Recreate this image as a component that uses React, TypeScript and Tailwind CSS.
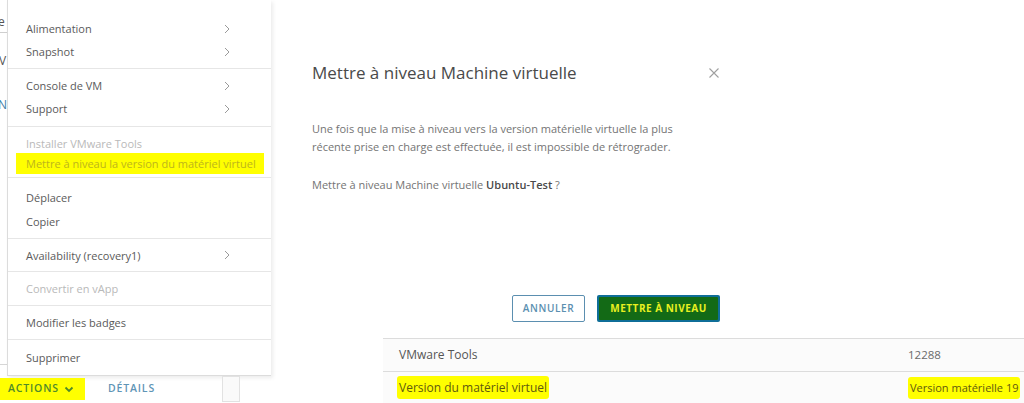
import React from 'react'

const font = { fontFamily: '"Open Sans", "Liberation Sans", sans-serif' }

function Chevron() {
    return (
        <svg width="8" height="10" viewBox="0 0 8 10" className="shrink-0">
            <polyline points="2,1 6,5 2,9" fill="none" stroke="#9a9a9a" strokeWidth="1" />
        </svg>
    )
}

function Item({ label, sub, disabled, h, mark }: { label: string; sub?: boolean; disabled?: boolean; h: string; mark?: boolean }) {
    return (
        <div className={`${h} flex items-center justify-between pl-[18px] pr-[40px]`}>
            <span
                className={`text-[11px] leading-none whitespace-nowrap ${mark ? 'bg-[#ffff00] -ml-[10px] pl-[10px] pr-[8px] py-[5px] text-[#bdb51c]' : disabled ? 'text-[#b9b9b9]' : 'text-[#5a5a5a]'}`}
            >
                {label}
            </span>
            {sub && <Chevron />}
        </div>
    )
}

function Menu() {
    return (
        <div className="w-[264px] bg-white border-l border-b border-[#dcdcdc] shadow-[2px_2px_4px_rgba(0,0,0,0.08)]">
            <div className="pt-[17px] pb-[5px] border-b border-[#e6e6e6]">
                <Item label="Alimentation" sub h="h-[23px]" />
                <Item label="Snapshot" sub h="h-[23px]" />
            </div>
            <div className="pt-[5px] pb-[6px] border-b border-[#e6e6e6]">
                <Item label="Console de VM" sub h="h-[23px]" />
                <Item label="Support" sub h="h-[23px]" />
            </div>
            <div className="pt-[6px] pb-[4px] border-b border-[#e6e6e6]">
                <Item label="Installer VMware Tools" disabled h="h-[20px]" />
                <Item label="Mettre à niveau la version du matériel virtuel" mark h="h-[20px]" />
            </div>
            <div className="pt-[7px] pb-[5px] border-b border-[#e6e6e6]">
                <Item label="Déplacer" h="h-[24px]" />
                <Item label="Copier" h="h-[24px]" />
            </div>
            <div className="pt-[4px] pb-[4px] border-b border-[#e6e6e6]">
                <Item label="Availability (recovery1)" sub h="h-[24px]" />
            </div>
            <div className="border-b border-[#e6e6e6]">
                <Item label="Convertir en vApp" disabled h="h-[33px]" />
            </div>
            <div className="border-b border-[#e6e6e6]">
                <Item label="Modifier les badges" h="h-[33px]" />
            </div>
            <div>
                <Item label="Supprimer" h="h-[35px]" />
            </div>
        </div>
    )
}

export default function App() {
    return (
        <div className="w-[1024px] h-[403px] bg-white overflow-hidden flex" style={font}>
            {/* left: actions menu */}
            <div className="w-[272px] shrink-0 flex flex-col">
                <div className="flex">
                    <div className="w-[7px] shrink-0 overflow-hidden text-[12px] text-[#555]">
                        <div className="h-[33px] border-b border-[#cfcfcf] flex items-end pb-[1px] -ml-[2px]">e</div>
                        <div className="mt-[19px] -ml-[1px]">V</div>
                        <div className="mt-[26px] -ml-[2px] text-[#3f7ea6]">N</div>
                        <div className="mt-[250px] border-b border-[#d6d6d6]" />
                    </div>
                    <Menu />
                </div>
                <div className="flex items-center h-[26px]">
                    <div className="bg-[#ffff00] h-[22px] w-[85px] flex items-center pl-[8px] gap-[5px]">
                        <span className="text-[10.5px] font-semibold tracking-[0.08em] text-[#4f8a2a]">ACTIONS</span>
                        <svg width="10" height="7" viewBox="0 0 10 7">
                            <polyline points="1.5,1.5 5,5 8.5,1.5" fill="none" stroke="#4f8a2a" strokeWidth="1.8" />
                        </svg>
                    </div>
                    <span className="ml-[23px] text-[10.5px] font-semibold tracking-[0.08em] text-[#5f95b6]">DÉTAILS</span>
                    <div className="ml-[67px] w-[18px] h-[26px] border border-[#e2e2e2] bg-[#fafafa]" />
                </div>
            </div>

            {/* right: dialog + table */}
            <div className="flex-1 flex flex-col">
                <div className="pl-[40px] pt-[60px] w-[450px]">
                    <div className="flex items-center justify-between">
                        <h1 className="text-[17px] text-[#4a4a4a] leading-[26px]">Mettre à niveau Machine virtuelle</h1>
                        <svg width="12" height="12" viewBox="0 0 12 12" className="mr-[2px]">
                            <path d="M1.5 1.5 L10.5 10.5 M10.5 1.5 L1.5 10.5" stroke="#a0a0a0" strokeWidth="1.1" />
                        </svg>
                    </div>
                    <p className="mt-[34px] text-[11px] leading-[18px] text-[#747474] w-[400px]">
                        Une fois que la mise à niveau vers la version matérielle virtuelle la plus récente prise en charge est effectuée, il est impossible de rétrograder.
                    </p>
                    <p className="mt-[20px] text-[11px] leading-[18px] text-[#747474]">
                        Mettre à niveau Machine virtuelle <span className="font-semibold text-[#4a4a4a]">Ubuntu-Test</span> ?
                    </p>
                </div>
                <div className="flex gap-[12px] pl-[240px] mt-[101px]">
                    <button className="w-[73px] h-[27px] border border-[#5b8fb0] rounded-[2px] text-[10px] font-semibold tracking-[0.06em] text-[#5b8fb0] bg-white">
                        ANNULER
                    </button>
                    <button className="w-[123px] h-[27px] rounded-[2px] bg-[#0f6e98] p-[2px]">
                        <span className="flex h-full items-center justify-center rounded-[1px] bg-[#136a16] text-[10px] font-bold tracking-[0.05em] text-[#e8f020]">
                            METTRE À NIVEAU
                        </span>
                    </button>
                </div>
                <div className="ml-[111px] mt-[16px] border-t border-[#dcdcdc] bg-[#fbfbfb] text-[12px] text-[#555]">
                    <div className="h-[33px] flex items-center border-b border-[#dcdcdc]">
                        <span className="pl-[16px] w-[525px]">VMware Tools</span>
                        <span className="text-[#6a6a6a] text-[11.5px]">12288</span>
                    </div>
                    <div className="h-[32px] flex items-center">
                        <span className="ml-[14px] w-[511px]">
                            <span className="bg-[#ffff00] text-[#5f5a10] px-[2px] py-[3px] rounded-[3px]">Version du matériel virtuel</span>
                        </span>
                        <span className="bg-[#ffff00] text-[#5f5a10] text-[11px] px-[2px] py-[3px] rounded-[3px] whitespace-nowrap">Version matérielle 19</span>
                    </div>
                </div>
            </div>
        </div>
    )
}
